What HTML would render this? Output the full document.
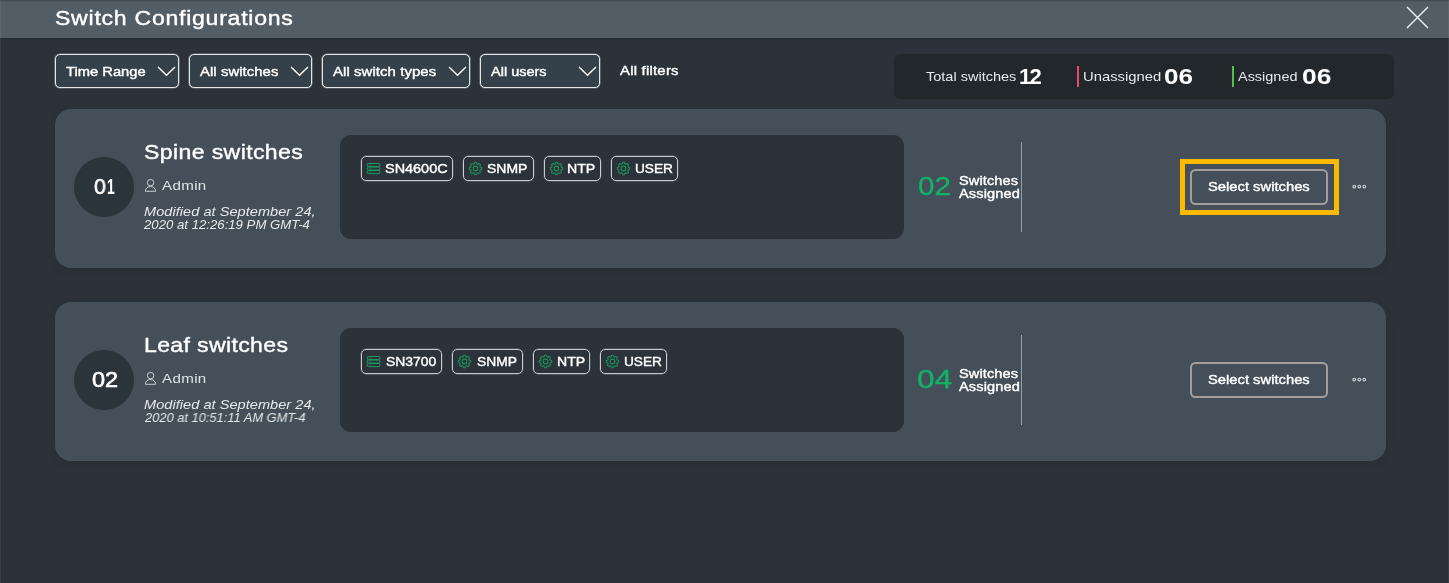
<!DOCTYPE html>
<html lang="en">
<head>
<meta charset="utf-8">
<title>Switch Configurations</title>
<style>
*{box-sizing:border-box;margin:0;padding:0}
html,body{width:1449px;height:583px;overflow:hidden;background:#2b323a}
body{position:relative;font-family:"Liberation Sans",sans-serif;color:#fff;-webkit-font-smoothing:antialiased}
.abs{position:absolute}
.t{position:absolute;white-space:nowrap;line-height:1;color:#fff;will-change:transform;transform-origin:0 0}
.m{-webkit-text-stroke:0.4px #fff}
#hdr{left:0;top:0;width:1449px;height:38px;background:linear-gradient(#3c454d 0,#525d66 2px,#525d66 100%);box-shadow:0 1px 1.5px rgba(20,30,36,.35)}
#edgeL{left:0;top:0;width:1px;height:583px;background:rgba(255,255,255,.06)}
#edgeR{left:1448px;top:0;width:1px;height:583px;background:rgba(255,255,255,.06)}
.fb{position:absolute;top:54px;height:34px;border:1px solid #e4e8ea;border-radius:5px;background:#35414a;box-shadow:0 0 0 .6px rgba(228,232,234,.45)}
.chev{position:absolute;top:11px;right:1px;width:21px;height:12px}
#stat{left:894px;top:54px;width:500px;height:45px;border-radius:6px;background:#22272c}
.bar{position:absolute;top:66px;width:2px;height:21px}
.card{position:absolute;left:55px;width:1331px;height:159px;border-radius:16px;background:#454f59;box-shadow:0 3px 10px rgba(0,0,0,.08)}
.circle{position:absolute;left:19px;top:48px;width:60px;height:60px;border-radius:50%;background:#2b333b}
.panel{position:absolute;left:285px;top:26px;width:564px;height:104px;border-radius:11px;background:#2b323a}
.chip{position:absolute;top:21px;height:25px;border:1px solid #c6cace;border-radius:5px;box-shadow:0 0 0 .4px rgba(198,202,206,.4)}
.chip svg.ic-s{position:absolute;left:4px;top:5px}
.chip svg.ic-g{position:absolute;left:4px;top:4px}
.vline{position:absolute;left:966px;top:33px;width:1px;height:90px;background:#9aa0a4}
.btn{position:absolute;left:1135px;top:60px;width:138px;height:36px;border:2px solid #a09f9e;border-radius:5.5px}
.hl{position:absolute;left:1125px;top:50px;width:159px;height:56px;border:5px solid #fbba00}
.dots{position:absolute;left:1296px;top:74px}
</style>
</head>
<body>
<div id="hdr" class="abs"></div>
<div id="edgeL" class="abs"></div>
<div id="edgeR" class="abs"></div>

<div class="t m" id="title" style="left:55px;top:8px;font-size:20.6px;letter-spacing:0.66px;transform:scaleX(1.12)">Switch Configurations</div>
<svg class="abs" style="left:1405px;top:5px" width="25" height="25" viewBox="0 0 25 25"><path d="M2 2L23 23M23 2L2 23" stroke="#f2f4f5" stroke-width="1.4" fill="none"/></svg>

<!-- filters -->
<div class="fb" style="left:55px;width:124px"><div class="t m" id="f1" style="left:10px;top:10px;font-size:13.3px;letter-spacing:0px;transform:scaleX(1.108)">Time Range</div>
<svg class="chev" viewBox="0 0 21 12"><path d="M2 1L10.5 9.3L19 1" stroke="#fff" stroke-width="1.4" fill="none"/></svg></div>
<div class="fb" style="left:189px;width:123px"><div class="t m" id="f2" style="left:10px;top:10px;font-size:13.3px;letter-spacing:0.05px;transform:scaleX(1.12)">All switches</div>
<svg class="chev" viewBox="0 0 21 12"><path d="M2 1L10.5 9.3L19 1" stroke="#fff" stroke-width="1.4" fill="none"/></svg></div>
<div class="fb" style="left:322px;width:148px"><div class="t m" id="f3" style="left:10px;top:10px;font-size:13.3px;letter-spacing:0.08px;transform:scaleX(1.12)">All switch types</div>
<svg class="chev" viewBox="0 0 21 12"><path d="M2 1L10.5 9.3L19 1" stroke="#fff" stroke-width="1.4" fill="none"/></svg></div>
<div class="fb" style="left:480px;width:120px"><div class="t m" id="f4" style="left:10px;top:10px;font-size:13.3px;letter-spacing:0px;transform:scaleX(1.0907)">All users</div>
<svg class="chev" viewBox="0 0 21 12"><path d="M2 1L10.5 9.3L19 1" stroke="#fff" stroke-width="1.4" fill="none"/></svg></div>
<div class="t m" id="f5" style="left:620px;top:64px;font-size:13.3px;letter-spacing:0.2px;transform:scaleX(1.12)">All filters</div>

<!-- stats -->
<div id="stat" class="abs"></div>
<div class="t" id="s1" style="left:926px;top:70px;font-size:13.5px;letter-spacing:0px;transform:scaleX(1.0753);color:#e6e9eb">Total switches</div>
<div class="t" id="s1n" style="left:1019px;top:66px;font-size:22px;font-weight:bold;letter-spacing:-1.83px;transform:scaleX(1.0)">12</div>
<div class="bar" style="left:1077px;background:#e8476f"></div>
<div class="t" id="s2" style="left:1083px;top:70px;font-size:13.5px;letter-spacing:0px;transform:scaleX(1.0978);color:#e6e9eb">Unassigned</div>
<div class="t" id="s2n" style="left:1164px;top:66px;font-size:22px;font-weight:bold;letter-spacing:0px;transform:scaleX(1.1822)">06</div>
<div class="bar" style="left:1232px;background:#4fc24a"></div>
<div class="t" id="s3" style="left:1238px;top:70px;font-size:13.5px;letter-spacing:0px;transform:scaleX(1.0706);color:#e6e9eb">Assigned</div>
<div class="t" id="s3n" style="left:1302px;top:66px;font-size:22px;font-weight:bold;letter-spacing:0px;transform:scaleX(1.2016)">06</div>

<!-- card 1 -->
<div class="card" style="top:109px">
  <div class="circle"></div>
  <div class="t m" id="c1zn" style="left:39px;top:67px;font-size:22px;letter-spacing:0px;transform:scaleX(0.9703);-webkit-text-stroke-width:.6px">0</div><div class="t" id="c1on" style="left:52px;top:67px;font-size:22px;letter-spacing:0px;transform:scaleX(0.6288);font-weight:bold">1</div>
  <div class="t m" id="c1t" style="left:89px;top:33px;font-size:20.6px;letter-spacing:0.34px;transform:scaleX(1.12)">Spine switches</div>
  <svg class="abs" style="left:89px;top:69px" width="14" height="16" viewBox="0 0 14 16"><g stroke="#cdd2d6" stroke-width=".95" fill="none"><circle cx="6.6" cy="4.6" r="3.25"/><path d="M1.4 13.3C1.4 10.300 3.600 8.500 6.500 8.500S11.600 10.300 11.600 13.300Z" stroke-linejoin="round"/></g></svg>
  <div class="t" id="c1a" style="left:107px;top:70px;font-size:13.5px;letter-spacing:0.31px;color:#dfe3e6;transform:scaleX(1.12)">Admin</div>
  <div class="t" id="c1d1" style="left:89px;top:96px;font-size:13px;font-style:italic;letter-spacing:0.03px;color:#e6e9eb;transform:scaleX(1.12)">Modified at September 24,</div>
  <div class="t" id="c1d2" style="left:89px;top:109px;font-size:13px;font-style:italic;letter-spacing:0px;color:#e6e9eb;transform:scaleX(1.014)">2020 at 12:26:19 PM GMT-4</div>
  <div class="panel">
    <div class="chip" style="left:21px;width:92px"><svg class="ic-s" width="15" height="13" viewBox="0 0 15 13"><g stroke="#1a9c5f" stroke-width="1" fill="none"><rect x="1.35" y="1.5" width="12.5" height="3.1" rx=".8"/><rect x="1.35" y="5" width="12.5" height="3.1" rx=".8"/><rect x="1.35" y="8.5" width="12.5" height="3.1" rx=".8"/></g><g fill="#1a9c5f" opacity=".75"><rect x="2.9" y="2.65" width=".8" height=".8"/><rect x="4.5" y="2.65" width=".8" height=".8"/><rect x="2.9" y="6.15" width=".8" height=".8"/><rect x="4.5" y="6.15" width=".8" height=".8"/><rect x="2.9" y="9.65" width=".8" height=".8"/><rect x="4.5" y="9.65" width=".8" height=".8"/></g></svg><div class="t m" id="c1k1" style="left:23px;top:5px;font-size:13.3px;letter-spacing:0px;transform:scaleX(1.0858)">SN4600C</div></div>
    <div class="chip" style="left:123px;width:71px"><svg class="ic-g" width="15" height="15" viewBox="0 0 15 15"><path d="M13.75 7.50L13.74 7.75L13.71 7.99L13.63 8.23L13.47 8.45L13.15 8.62L12.72 8.75L12.34 8.87L12.11 9.00L11.98 9.15L11.89 9.32L11.83 9.50L11.82 9.70L11.89 9.96L12.08 10.30L12.29 10.70L12.39 11.05L12.35 11.32L12.23 11.54L12.09 11.74L11.92 11.92L11.74 12.09L11.54 12.23L11.32 12.35L11.05 12.39L10.70 12.29L10.30 12.08L9.96 11.89L9.70 11.82L9.50 11.83L9.32 11.89L9.15 11.98L9.00 12.11L8.87 12.34L8.75 12.72L8.62 13.15L8.45 13.47L8.23 13.63L7.99 13.71L7.75 13.74L7.50 13.75L7.25 13.74L7.01 13.71L6.77 13.63L6.55 13.47L6.38 13.15L6.25 12.72L6.13 12.34L6.00 12.11L5.85 11.98L5.68 11.89L5.50 11.83L5.30 11.82L5.04 11.89L4.70 12.08L4.30 12.29L3.95 12.39L3.68 12.35L3.46 12.23L3.26 12.09L3.08 11.92L2.91 11.74L2.77 11.54L2.65 11.32L2.61 11.05L2.71 10.70L2.92 10.30L3.11 9.96L3.18 9.70L3.17 9.50L3.11 9.32L3.02 9.15L2.89 9.00L2.66 8.87L2.28 8.75L1.85 8.62L1.53 8.45L1.37 8.23L1.29 7.99L1.26 7.75L1.25 7.50L1.26 7.25L1.29 7.01L1.37 6.77L1.53 6.55L1.85 6.38L2.28 6.25L2.66 6.13L2.89 6.00L3.02 5.85L3.11 5.68L3.17 5.50L3.18 5.30L3.11 5.04L2.92 4.70L2.71 4.30L2.61 3.95L2.65 3.68L2.77 3.46L2.91 3.26L3.08 3.08L3.26 2.91L3.46 2.77L3.68 2.65L3.95 2.61L4.30 2.71L4.70 2.92L5.04 3.11L5.30 3.18L5.50 3.17L5.68 3.11L5.85 3.02L6.00 2.89L6.13 2.66L6.25 2.28L6.38 1.85L6.55 1.53L6.77 1.37L7.01 1.29L7.25 1.26L7.50 1.25L7.75 1.26L7.99 1.29L8.23 1.37L8.45 1.53L8.62 1.85L8.75 2.28L8.87 2.66L9.00 2.89L9.15 3.02L9.32 3.11L9.50 3.17L9.70 3.18L9.96 3.11L10.30 2.92L10.70 2.71L11.05 2.61L11.32 2.65L11.54 2.77L11.74 2.91L11.92 3.08L12.09 3.26L12.23 3.46L12.35 3.68L12.39 3.95L12.29 4.30L12.08 4.70L11.89 5.04L11.82 5.30L11.83 5.50L11.89 5.68L11.98 5.85L12.11 6.00L12.34 6.13L12.72 6.25L13.15 6.38L13.47 6.55L13.63 6.77L13.71 7.01L13.74 7.25Z" stroke="#1c9159" stroke-width="1.1" fill="none" stroke-linejoin="round"/><circle cx="7.5" cy="7.5" r="2.35" stroke="#1c9159" stroke-width="1.1" fill="none"/></svg><div class="t m" id="c1k2" style="left:23px;top:5px;font-size:13.3px;letter-spacing:0px;transform:scaleX(1.0508)">SNMP</div></div>
    <div class="chip" style="left:204px;width:57px"><svg class="ic-g" width="15" height="15" viewBox="0 0 15 15"><path d="M13.75 7.50L13.74 7.75L13.71 7.99L13.63 8.23L13.47 8.45L13.15 8.62L12.72 8.75L12.34 8.87L12.11 9.00L11.98 9.15L11.89 9.32L11.83 9.50L11.82 9.70L11.89 9.96L12.08 10.30L12.29 10.70L12.39 11.05L12.35 11.32L12.23 11.54L12.09 11.74L11.92 11.92L11.74 12.09L11.54 12.23L11.32 12.35L11.05 12.39L10.70 12.29L10.30 12.08L9.96 11.89L9.70 11.82L9.50 11.83L9.32 11.89L9.15 11.98L9.00 12.11L8.87 12.34L8.75 12.72L8.62 13.15L8.45 13.47L8.23 13.63L7.99 13.71L7.75 13.74L7.50 13.75L7.25 13.74L7.01 13.71L6.77 13.63L6.55 13.47L6.38 13.15L6.25 12.72L6.13 12.34L6.00 12.11L5.85 11.98L5.68 11.89L5.50 11.83L5.30 11.82L5.04 11.89L4.70 12.08L4.30 12.29L3.95 12.39L3.68 12.35L3.46 12.23L3.26 12.09L3.08 11.92L2.91 11.74L2.77 11.54L2.65 11.32L2.61 11.05L2.71 10.70L2.92 10.30L3.11 9.96L3.18 9.70L3.17 9.50L3.11 9.32L3.02 9.15L2.89 9.00L2.66 8.87L2.28 8.75L1.85 8.62L1.53 8.45L1.37 8.23L1.29 7.99L1.26 7.75L1.25 7.50L1.26 7.25L1.29 7.01L1.37 6.77L1.53 6.55L1.85 6.38L2.28 6.25L2.66 6.13L2.89 6.00L3.02 5.85L3.11 5.68L3.17 5.50L3.18 5.30L3.11 5.04L2.92 4.70L2.71 4.30L2.61 3.95L2.65 3.68L2.77 3.46L2.91 3.26L3.08 3.08L3.26 2.91L3.46 2.77L3.68 2.65L3.95 2.61L4.30 2.71L4.70 2.92L5.04 3.11L5.30 3.18L5.50 3.17L5.68 3.11L5.85 3.02L6.00 2.89L6.13 2.66L6.25 2.28L6.38 1.85L6.55 1.53L6.77 1.37L7.01 1.29L7.25 1.26L7.50 1.25L7.75 1.26L7.99 1.29L8.23 1.37L8.45 1.53L8.62 1.85L8.75 2.28L8.87 2.66L9.00 2.89L9.15 3.02L9.32 3.11L9.50 3.17L9.70 3.18L9.96 3.11L10.30 2.92L10.70 2.71L11.05 2.61L11.32 2.65L11.54 2.77L11.74 2.91L11.92 3.08L12.09 3.26L12.23 3.46L12.35 3.68L12.39 3.95L12.29 4.30L12.08 4.70L11.89 5.04L11.82 5.30L11.83 5.50L11.89 5.68L11.98 5.85L12.11 6.00L12.34 6.13L12.72 6.25L13.15 6.38L13.47 6.55L13.63 6.77L13.71 7.01L13.74 7.25Z" stroke="#1c9159" stroke-width="1.1" fill="none" stroke-linejoin="round"/><circle cx="7.5" cy="7.5" r="2.35" stroke="#1c9159" stroke-width="1.1" fill="none"/></svg><div class="t m" id="c1k3" style="left:22px;top:5px;font-size:13.3px;letter-spacing:0px;transform:scaleX(1.0647)">NTP</div></div>
    <div class="chip" style="left:271px;width:67px"><svg class="ic-g" width="15" height="15" viewBox="0 0 15 15"><path d="M13.75 7.50L13.74 7.75L13.71 7.99L13.63 8.23L13.47 8.45L13.15 8.62L12.72 8.75L12.34 8.87L12.11 9.00L11.98 9.15L11.89 9.32L11.83 9.50L11.82 9.70L11.89 9.96L12.08 10.30L12.29 10.70L12.39 11.05L12.35 11.32L12.23 11.54L12.09 11.74L11.92 11.92L11.74 12.09L11.54 12.23L11.32 12.35L11.05 12.39L10.70 12.29L10.30 12.08L9.96 11.89L9.70 11.82L9.50 11.83L9.32 11.89L9.15 11.98L9.00 12.11L8.87 12.34L8.75 12.72L8.62 13.15L8.45 13.47L8.23 13.63L7.99 13.71L7.75 13.74L7.50 13.75L7.25 13.74L7.01 13.71L6.77 13.63L6.55 13.47L6.38 13.15L6.25 12.72L6.13 12.34L6.00 12.11L5.85 11.98L5.68 11.89L5.50 11.83L5.30 11.82L5.04 11.89L4.70 12.08L4.30 12.29L3.95 12.39L3.68 12.35L3.46 12.23L3.26 12.09L3.08 11.92L2.91 11.74L2.77 11.54L2.65 11.32L2.61 11.05L2.71 10.70L2.92 10.30L3.11 9.96L3.18 9.70L3.17 9.50L3.11 9.32L3.02 9.15L2.89 9.00L2.66 8.87L2.28 8.75L1.85 8.62L1.53 8.45L1.37 8.23L1.29 7.99L1.26 7.75L1.25 7.50L1.26 7.25L1.29 7.01L1.37 6.77L1.53 6.55L1.85 6.38L2.28 6.25L2.66 6.13L2.89 6.00L3.02 5.85L3.11 5.68L3.17 5.50L3.18 5.30L3.11 5.04L2.92 4.70L2.71 4.30L2.61 3.95L2.65 3.68L2.77 3.46L2.91 3.26L3.08 3.08L3.26 2.91L3.46 2.77L3.68 2.65L3.95 2.61L4.30 2.71L4.70 2.92L5.04 3.11L5.30 3.18L5.50 3.17L5.68 3.11L5.85 3.02L6.00 2.89L6.13 2.66L6.25 2.28L6.38 1.85L6.55 1.53L6.77 1.37L7.01 1.29L7.25 1.26L7.50 1.25L7.75 1.26L7.99 1.29L8.23 1.37L8.45 1.53L8.62 1.85L8.75 2.28L8.87 2.66L9.00 2.89L9.15 3.02L9.32 3.11L9.50 3.17L9.70 3.18L9.96 3.11L10.30 2.92L10.70 2.71L11.05 2.61L11.32 2.65L11.54 2.77L11.74 2.91L11.92 3.08L12.09 3.26L12.23 3.46L12.35 3.68L12.39 3.95L12.29 4.30L12.08 4.70L11.89 5.04L11.82 5.30L11.83 5.50L11.89 5.68L11.98 5.85L12.11 6.00L12.34 6.13L12.72 6.25L13.15 6.38L13.47 6.55L13.63 6.77L13.71 7.01L13.74 7.25Z" stroke="#1c9159" stroke-width="1.1" fill="none" stroke-linejoin="round"/><circle cx="7.5" cy="7.5" r="2.35" stroke="#1c9159" stroke-width="1.1" fill="none"/></svg><div class="t m" id="c1k4" style="left:23px;top:5px;font-size:13.3px;letter-spacing:0px;transform:scaleX(1.028)">USER</div></div>
  </div>
  <div class="t" id="c1g" style="left:863px;top:65px;font-size:25px;color:#10b467;-webkit-text-stroke:.3px #10b467;letter-spacing:0px;transform:scaleX(1.1807)">02</div>
  <div class="t m" id="c1s1" style="left:904px;top:65px;font-size:13px;letter-spacing:0.09px;transform:scaleX(1.12)">Switches</div>
  <div class="t m" id="c1s2" style="left:904px;top:78px;font-size:13px;letter-spacing:0.11px;transform:scaleX(1.12)">Assigned</div>
  <div class="vline"></div>
  <div class="hl"></div>
  <div class="btn"><div class="t m" id="c1b" style="left:16px;top:9px;font-size:13.3px;letter-spacing:0px;transform:scaleX(1.11)">Select switches</div></div>
  <svg class="dots" width="18" height="8" viewBox="0 0 18 8"><g stroke="#c8ccd0" stroke-width="1.2" fill="none"><circle cx="3.3" cy="3.6" r="1.35"/><circle cx="8.300" cy="3.600" r="1.35"/><circle cx="13.25" cy="3.6" r="1.35"/></g></svg>
</div>

<!-- card 2 -->
<div class="card" style="top:302px">
  <div class="circle"></div>
  <div class="t m" id="c2n" style="left:37px;top:67px;font-size:22px;letter-spacing:0px;transform:scaleX(1.0686);-webkit-text-stroke-width:.6px">02</div>
  <div class="t m" id="c2t" style="left:89px;top:33px;font-size:20.6px;letter-spacing:0.31px;transform:scaleX(1.12)">Leaf switches</div>
  <svg class="abs" style="left:89px;top:69px" width="14" height="16" viewBox="0 0 14 16"><g stroke="#cdd2d6" stroke-width=".95" fill="none"><circle cx="6.6" cy="4.6" r="3.25"/><path d="M1.4 13.3C1.4 10.300 3.600 8.500 6.500 8.500S11.600 10.300 11.600 13.300Z" stroke-linejoin="round"/></g></svg>
  <div class="t" id="c2a" style="left:107px;top:70px;font-size:13.5px;letter-spacing:0.31px;color:#dfe3e6;transform:scaleX(1.12)">Admin</div>
  <div class="t" id="c2d1" style="left:89px;top:96px;font-size:13px;font-style:italic;letter-spacing:0.03px;color:#e6e9eb;transform:scaleX(1.12)">Modified at September 24,</div>
  <div class="t" id="c2d2" style="left:90px;top:109px;font-size:13px;font-style:italic;letter-spacing:0px;color:#e6e9eb;transform:scaleX(0.9898)">2020 at 10:51:11 AM GMT-4</div>
  <div class="panel">
    <div class="chip" style="left:21px;width:81px"><svg class="ic-s" width="15" height="13" viewBox="0 0 15 13"><g stroke="#1a9c5f" stroke-width="1" fill="none"><rect x="1.35" y="1.5" width="12.5" height="3.1" rx=".8"/><rect x="1.35" y="5" width="12.5" height="3.1" rx=".8"/><rect x="1.35" y="8.5" width="12.5" height="3.1" rx=".8"/></g><g fill="#1a9c5f" opacity=".75"><rect x="2.9" y="2.65" width=".8" height=".8"/><rect x="4.5" y="2.65" width=".8" height=".8"/><rect x="2.9" y="6.15" width=".8" height=".8"/><rect x="4.5" y="6.15" width=".8" height=".8"/><rect x="2.9" y="9.65" width=".8" height=".8"/><rect x="4.5" y="9.65" width=".8" height=".8"/></g></svg><div class="t m" id="c2k1" style="left:24px;top:5px;font-size:13.3px;letter-spacing:0px;transform:scaleX(1.045)">SN3700</div></div>
    <div class="chip" style="left:112px;width:71px"><svg class="ic-g" width="15" height="15" viewBox="0 0 15 15"><path d="M13.75 7.50L13.74 7.75L13.71 7.99L13.63 8.23L13.47 8.45L13.15 8.62L12.72 8.75L12.34 8.87L12.11 9.00L11.98 9.15L11.89 9.32L11.83 9.50L11.82 9.70L11.89 9.96L12.08 10.30L12.29 10.70L12.39 11.05L12.35 11.32L12.23 11.54L12.09 11.74L11.92 11.92L11.74 12.09L11.54 12.23L11.32 12.35L11.05 12.39L10.70 12.29L10.30 12.08L9.96 11.89L9.70 11.82L9.50 11.83L9.32 11.89L9.15 11.98L9.00 12.11L8.87 12.34L8.75 12.72L8.62 13.15L8.45 13.47L8.23 13.63L7.99 13.71L7.75 13.74L7.50 13.75L7.25 13.74L7.01 13.71L6.77 13.63L6.55 13.47L6.38 13.15L6.25 12.72L6.13 12.34L6.00 12.11L5.85 11.98L5.68 11.89L5.50 11.83L5.30 11.82L5.04 11.89L4.70 12.08L4.30 12.29L3.95 12.39L3.68 12.35L3.46 12.23L3.26 12.09L3.08 11.92L2.91 11.74L2.77 11.54L2.65 11.32L2.61 11.05L2.71 10.70L2.92 10.30L3.11 9.96L3.18 9.70L3.17 9.50L3.11 9.32L3.02 9.15L2.89 9.00L2.66 8.87L2.28 8.75L1.85 8.62L1.53 8.45L1.37 8.23L1.29 7.99L1.26 7.75L1.25 7.50L1.26 7.25L1.29 7.01L1.37 6.77L1.53 6.55L1.85 6.38L2.28 6.25L2.66 6.13L2.89 6.00L3.02 5.85L3.11 5.68L3.17 5.50L3.18 5.30L3.11 5.04L2.92 4.70L2.71 4.30L2.61 3.95L2.65 3.68L2.77 3.46L2.91 3.26L3.08 3.08L3.26 2.91L3.46 2.77L3.68 2.65L3.95 2.61L4.30 2.71L4.70 2.92L5.04 3.11L5.30 3.18L5.50 3.17L5.68 3.11L5.85 3.02L6.00 2.89L6.13 2.66L6.25 2.28L6.38 1.85L6.55 1.53L6.77 1.37L7.01 1.29L7.25 1.26L7.50 1.25L7.75 1.26L7.99 1.29L8.23 1.37L8.45 1.53L8.62 1.85L8.75 2.28L8.87 2.66L9.00 2.89L9.15 3.02L9.32 3.11L9.50 3.17L9.70 3.18L9.96 3.11L10.30 2.92L10.70 2.71L11.05 2.61L11.32 2.65L11.54 2.77L11.74 2.91L11.92 3.08L12.09 3.26L12.23 3.46L12.35 3.68L12.39 3.95L12.29 4.30L12.08 4.70L11.89 5.04L11.82 5.30L11.83 5.50L11.89 5.68L11.98 5.85L12.11 6.00L12.34 6.13L12.72 6.25L13.15 6.38L13.47 6.55L13.63 6.77L13.71 7.01L13.74 7.25Z" stroke="#1c9159" stroke-width="1.1" fill="none" stroke-linejoin="round"/><circle cx="7.5" cy="7.5" r="2.35" stroke="#1c9159" stroke-width="1.1" fill="none"/></svg><div class="t m" id="c2k2" style="left:24px;top:5px;font-size:13.3px;letter-spacing:0px;transform:scaleX(1.0387)">SNMP</div></div>
    <div class="chip" style="left:193px;width:57px"><svg class="ic-g" width="15" height="15" viewBox="0 0 15 15"><path d="M13.75 7.50L13.74 7.75L13.71 7.99L13.63 8.23L13.47 8.45L13.15 8.62L12.72 8.75L12.34 8.87L12.11 9.00L11.98 9.15L11.89 9.32L11.83 9.50L11.82 9.70L11.89 9.96L12.08 10.30L12.29 10.70L12.39 11.05L12.35 11.32L12.23 11.54L12.09 11.74L11.92 11.92L11.74 12.09L11.54 12.23L11.32 12.35L11.05 12.39L10.70 12.29L10.30 12.08L9.96 11.89L9.70 11.82L9.50 11.83L9.32 11.89L9.15 11.98L9.00 12.11L8.87 12.34L8.75 12.72L8.62 13.15L8.45 13.47L8.23 13.63L7.99 13.71L7.75 13.74L7.50 13.75L7.25 13.74L7.01 13.71L6.77 13.63L6.55 13.47L6.38 13.15L6.25 12.72L6.13 12.34L6.00 12.11L5.85 11.98L5.68 11.89L5.50 11.83L5.30 11.82L5.04 11.89L4.70 12.08L4.30 12.29L3.95 12.39L3.68 12.35L3.46 12.23L3.26 12.09L3.08 11.92L2.91 11.74L2.77 11.54L2.65 11.32L2.61 11.05L2.71 10.70L2.92 10.30L3.11 9.96L3.18 9.70L3.17 9.50L3.11 9.32L3.02 9.15L2.89 9.00L2.66 8.87L2.28 8.75L1.85 8.62L1.53 8.45L1.37 8.23L1.29 7.99L1.26 7.75L1.25 7.50L1.26 7.25L1.29 7.01L1.37 6.77L1.53 6.55L1.85 6.38L2.28 6.25L2.66 6.13L2.89 6.00L3.02 5.85L3.11 5.68L3.17 5.50L3.18 5.30L3.11 5.04L2.92 4.70L2.71 4.30L2.61 3.95L2.65 3.68L2.77 3.46L2.91 3.26L3.08 3.08L3.26 2.91L3.46 2.77L3.68 2.65L3.95 2.61L4.30 2.71L4.70 2.92L5.04 3.11L5.30 3.18L5.50 3.17L5.68 3.11L5.85 3.02L6.00 2.89L6.13 2.66L6.25 2.28L6.38 1.85L6.55 1.53L6.77 1.37L7.01 1.29L7.25 1.26L7.50 1.25L7.75 1.26L7.99 1.29L8.23 1.37L8.45 1.53L8.62 1.85L8.75 2.28L8.87 2.66L9.00 2.89L9.15 3.02L9.32 3.11L9.50 3.17L9.70 3.18L9.96 3.11L10.30 2.92L10.70 2.71L11.05 2.61L11.32 2.65L11.54 2.77L11.74 2.91L11.92 3.08L12.09 3.26L12.23 3.46L12.35 3.68L12.39 3.95L12.29 4.30L12.08 4.70L11.89 5.04L11.82 5.30L11.83 5.50L11.89 5.68L11.98 5.85L12.11 6.00L12.34 6.13L12.72 6.25L13.15 6.38L13.47 6.55L13.63 6.77L13.71 7.01L13.74 7.25Z" stroke="#1c9159" stroke-width="1.1" fill="none" stroke-linejoin="round"/><circle cx="7.5" cy="7.5" r="2.35" stroke="#1c9159" stroke-width="1.1" fill="none"/></svg><div class="t m" id="c2k3" style="left:23px;top:5px;font-size:13.3px;letter-spacing:0px;transform:scaleX(1.061)">NTP</div></div>
    <div class="chip" style="left:260px;width:67px"><svg class="ic-g" width="15" height="15" viewBox="0 0 15 15"><path d="M13.75 7.50L13.74 7.75L13.71 7.99L13.63 8.23L13.47 8.45L13.15 8.62L12.72 8.75L12.34 8.87L12.11 9.00L11.98 9.15L11.89 9.32L11.83 9.50L11.82 9.70L11.89 9.96L12.08 10.30L12.29 10.70L12.39 11.05L12.35 11.32L12.23 11.54L12.09 11.74L11.92 11.92L11.74 12.09L11.54 12.23L11.32 12.35L11.05 12.39L10.70 12.29L10.30 12.08L9.96 11.89L9.70 11.82L9.50 11.83L9.32 11.89L9.15 11.98L9.00 12.11L8.87 12.34L8.75 12.72L8.62 13.15L8.45 13.47L8.23 13.63L7.99 13.71L7.75 13.74L7.50 13.75L7.25 13.74L7.01 13.71L6.77 13.63L6.55 13.47L6.38 13.15L6.25 12.72L6.13 12.34L6.00 12.11L5.85 11.98L5.68 11.89L5.50 11.83L5.30 11.82L5.04 11.89L4.70 12.08L4.30 12.29L3.95 12.39L3.68 12.35L3.46 12.23L3.26 12.09L3.08 11.92L2.91 11.74L2.77 11.54L2.65 11.32L2.61 11.05L2.71 10.70L2.92 10.30L3.11 9.96L3.18 9.70L3.17 9.50L3.11 9.32L3.02 9.15L2.89 9.00L2.66 8.87L2.28 8.75L1.85 8.62L1.53 8.45L1.37 8.23L1.29 7.99L1.26 7.75L1.25 7.50L1.26 7.25L1.29 7.01L1.37 6.77L1.53 6.55L1.85 6.38L2.28 6.25L2.66 6.13L2.89 6.00L3.02 5.85L3.11 5.68L3.17 5.50L3.18 5.30L3.11 5.04L2.92 4.70L2.71 4.30L2.61 3.95L2.65 3.68L2.77 3.46L2.91 3.26L3.08 3.08L3.26 2.91L3.46 2.77L3.68 2.65L3.95 2.61L4.30 2.71L4.70 2.92L5.04 3.11L5.30 3.18L5.50 3.17L5.68 3.11L5.85 3.02L6.00 2.89L6.13 2.66L6.25 2.28L6.38 1.85L6.55 1.53L6.77 1.37L7.01 1.29L7.25 1.26L7.50 1.25L7.75 1.26L7.99 1.29L8.23 1.37L8.45 1.53L8.62 1.85L8.75 2.28L8.87 2.66L9.00 2.89L9.15 3.02L9.32 3.11L9.50 3.17L9.70 3.18L9.96 3.11L10.30 2.92L10.70 2.71L11.05 2.61L11.32 2.65L11.54 2.77L11.74 2.91L11.92 3.08L12.09 3.26L12.23 3.46L12.35 3.68L12.39 3.95L12.29 4.30L12.08 4.70L11.89 5.04L11.82 5.30L11.83 5.50L11.89 5.68L11.98 5.85L12.11 6.00L12.34 6.13L12.72 6.25L13.15 6.38L13.47 6.55L13.63 6.77L13.71 7.01L13.74 7.25Z" stroke="#1c9159" stroke-width="1.1" fill="none" stroke-linejoin="round"/><circle cx="7.5" cy="7.5" r="2.35" stroke="#1c9159" stroke-width="1.1" fill="none"/></svg><div class="t m" id="c2k4" style="left:23px;top:5px;font-size:13.3px;letter-spacing:0px;transform:scaleX(1.028)">USER</div></div>
  </div>
  <div class="t" id="c2g" style="left:862px;top:65px;font-size:25px;color:#10b467;-webkit-text-stroke:.3px #10b467;letter-spacing:0px;transform:scaleX(1.2661)">04</div>
  <div class="t m" id="c2s1" style="left:904px;top:65px;font-size:13px;letter-spacing:0.09px;transform:scaleX(1.12)">Switches</div>
  <div class="t m" id="c2s2" style="left:904px;top:78px;font-size:13px;letter-spacing:0.11px;transform:scaleX(1.12)">Assigned</div>
  <div class="vline"></div>
  <div class="btn"><div class="t m" id="c2b" style="left:16px;top:9px;font-size:13.3px;letter-spacing:0px;transform:scaleX(1.11)">Select switches</div></div>
  <svg class="dots" width="18" height="8" viewBox="0 0 18 8"><g stroke="#c8ccd0" stroke-width="1.2" fill="none"><circle cx="3.3" cy="3.6" r="1.35"/><circle cx="8.300" cy="3.600" r="1.35"/><circle cx="13.25" cy="3.6" r="1.35"/></g></svg>
</div>
</body>
</html>
